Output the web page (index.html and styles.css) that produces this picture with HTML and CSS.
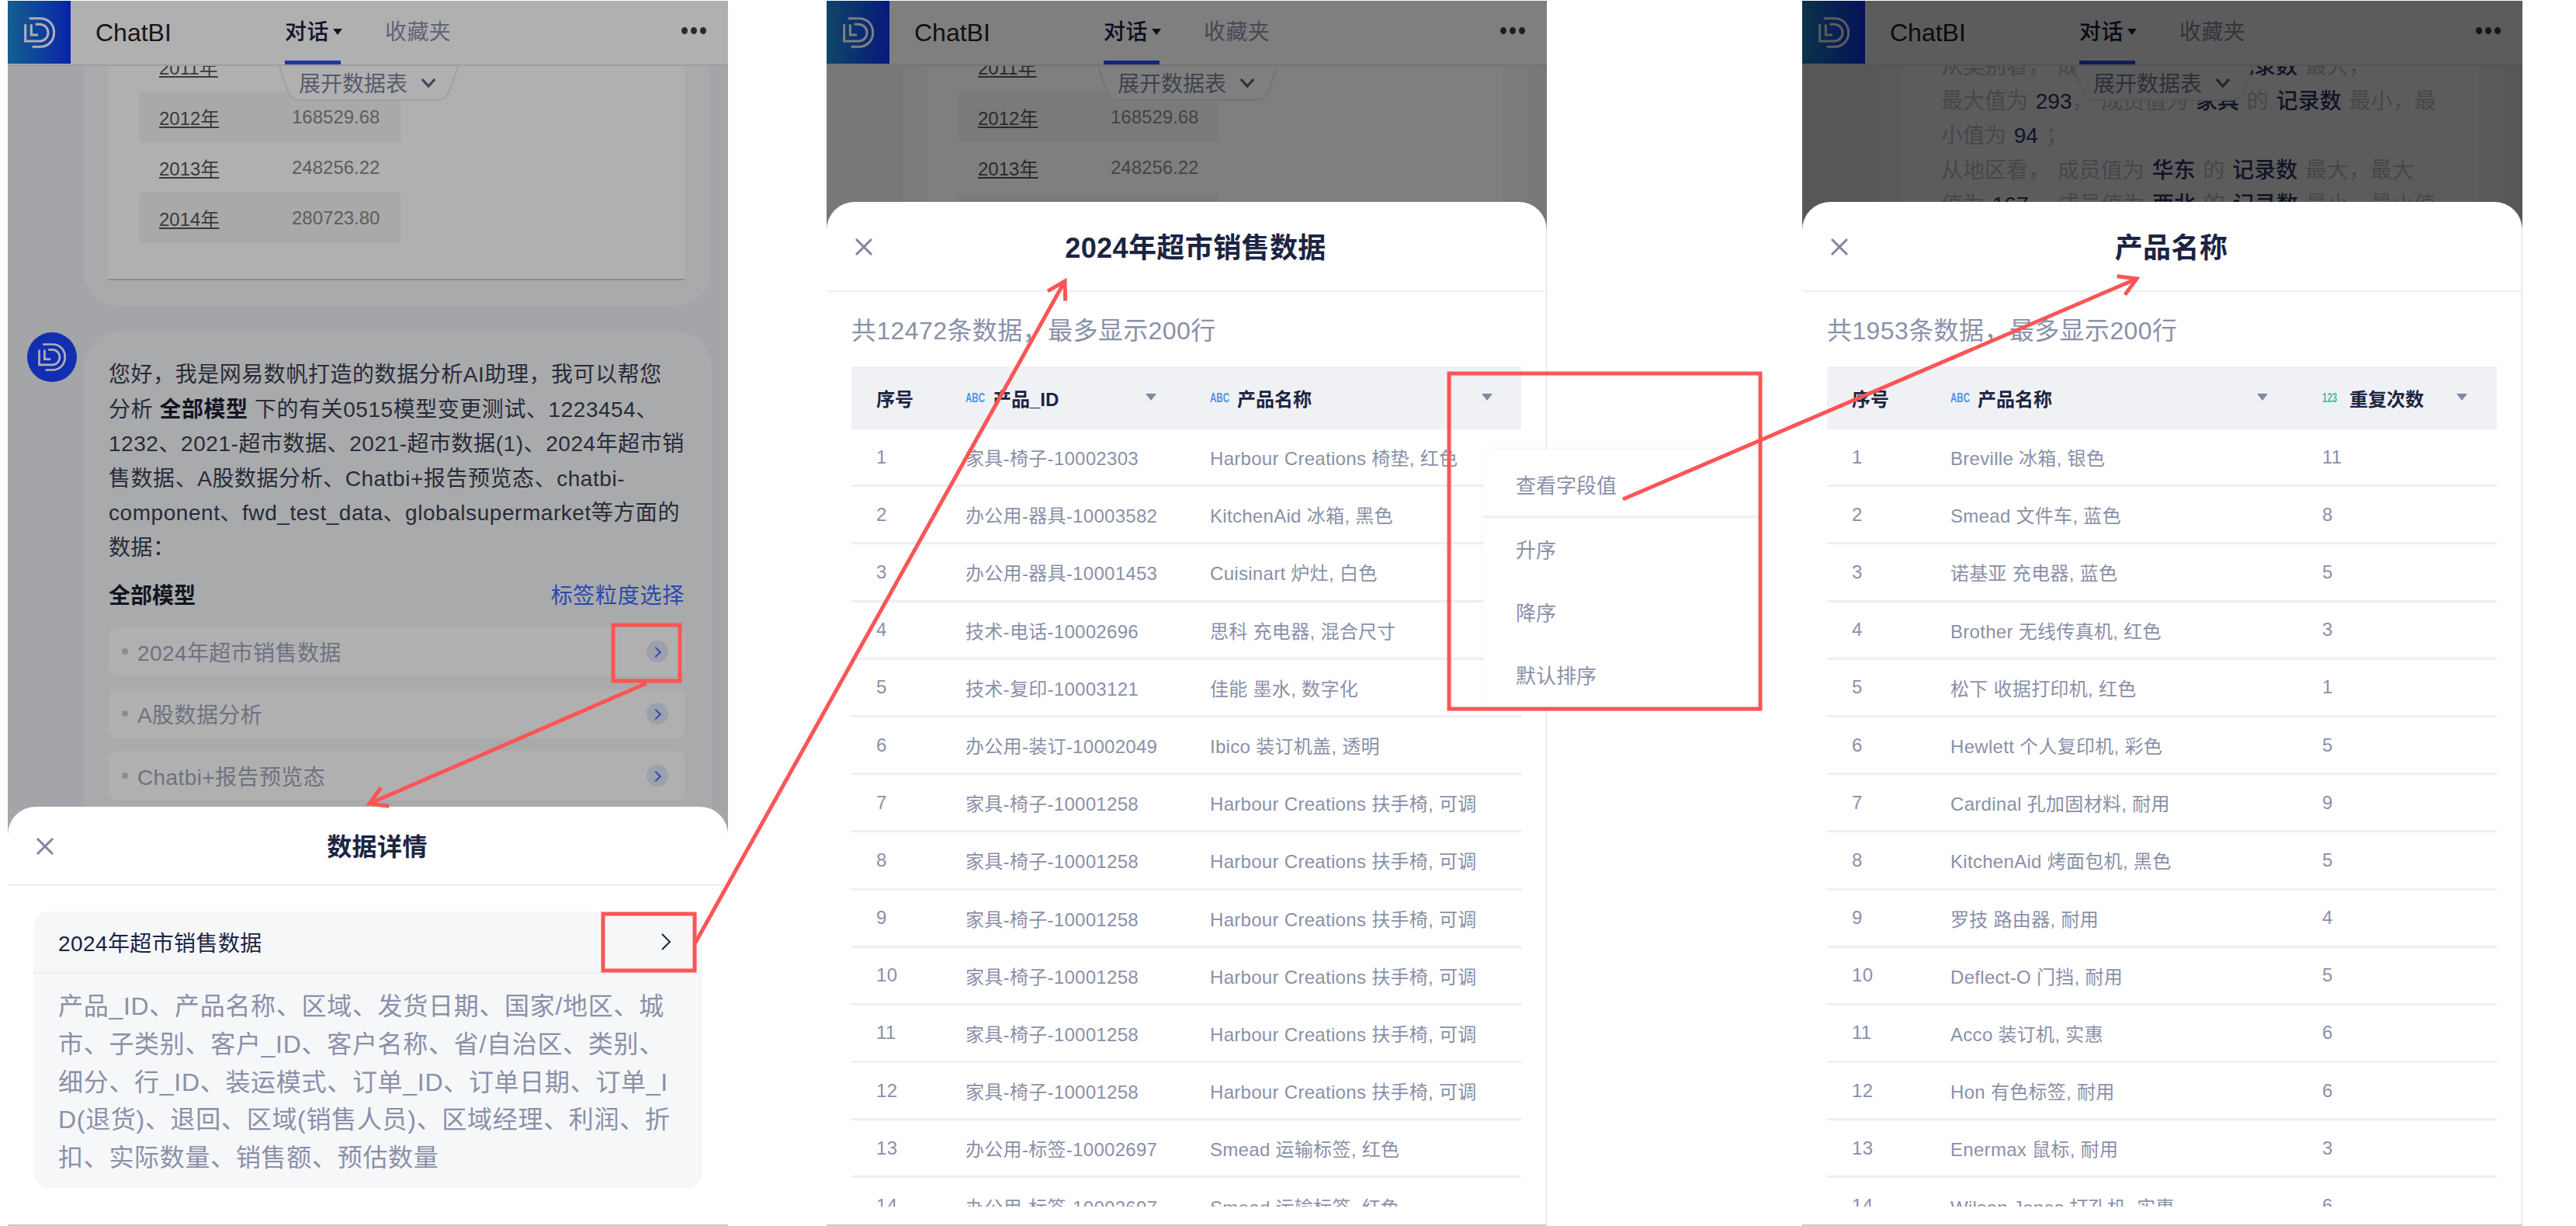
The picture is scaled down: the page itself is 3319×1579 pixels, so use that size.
FILE: index.html
```html
<!DOCTYPE html>
<html lang="zh-CN">
<head>
    <meta charset="UTF-8">
    <title>ChatBI</title>
    <link rel="stylesheet" href="styles.css">
</head>
<body>
<svg class="defs" width="0" height="0">
    <symbol id="logo" viewBox="0 0 120 120">
        <g fill="none" stroke="currentColor" stroke-width="9">
            <path d="M20 5H62C95 5 116 30 116 60C116 92 92 115 62 115H32"/>
            <path d="M44 28H60C80 28 93 43 93 60C93 79 79 93 60 93H5V28"/>
            <path d="M28 28V69H54"/>
        </g>
    </symbol>
    <symbol id="close" viewBox="0 0 24 24">
        <path d="M2 2L22 22M22 2L2 22" fill="none" stroke="currentColor" stroke-width="3"/>
    </symbol>
</svg>

<div class="page">
    <!-- first phone -->
    <section class="phone phone-a">
        <header class="topbar">
            <div class="brand"><svg class="brand-logo"><use href="#logo"/></svg></div>
            <div class="app-name">ChatBI</div>
            <nav class="tabs">
                <div class="tab active">对话<i class="caret"></i></div>
                <div class="tab">收藏夹</div>
            </nav>
            <div class="dots"><i></i><i></i><i></i></div>
        </header>
        <div class="tab-toggle">
            <svg class="tab-shape" viewBox="0 0 232 46"><path d="M1 0C5 14 10 28 14 36C17 42 22 44 28 44H204C210 44 215 42 218 36C222 28 227 14 231 0" /></svg>
            <span>展开数据表</span>
            <svg class="tab-chev" viewBox="0 0 22 14"><path d="M2 2L11 12L20 2"/></svg>
        </div>
        <div class="scroll">
            <div class="bubble table-bubble">
                <div class="table-inner">
                    <table class="year-table">
                        <tr><td><u>2011年</u></td><td></td></tr>
                        <tr class="shade"><td><u>2012年</u></td><td>168529.68</td></tr>
                        <tr><td><u>2013年</u></td><td>248256.22</td></tr>
                        <tr class="shade"><td><u>2014年</u></td><td>280723.80</td></tr>
                    </table>
                </div>
            </div>
            <div class="msg">
                <div class="avatar"><svg><use href="#logo"/></svg></div>
                <div class="bubble msg-bubble">
                    <p class="msg-text">您好，我是网易数帆打造的数据分析AI助理，我可以帮您<br>分析 <b>全部模型</b> 下的有关0515模型变更测试、1223454、<br>1232、2021-超市数据、2021-超市数据(1)、2024年超市销<br>售数据、A股数据分析、Chatbi+报告预览态、chatbi-<br>component、fwd_test_data、globalsupermarket等方面的<br>数据：</p>
                    <div class="model-head"><b>全部模型</b><a>标签粒度选择</a></div>
                    <div class="model-item"><i class="dot"></i><span>2024年超市销售数据</span><i class="go"></i></div>
                    <div class="model-item"><i class="dot"></i><span>A股数据分析</span><i class="go"></i></div>
                    <div class="model-item"><i class="dot"></i><span>Chatbi+报告预览态</span><i class="go"></i></div>
                </div>
            </div>
        </div>
        <div class="scrim"></div>
        <div class="sheet sheet-low">
            <div class="sheet-head">
                <svg class="close"><use href="#close"/></svg>
                <h2>数据详情</h2>
            </div>
            <div class="detail-card">
                <div class="detail-title"><span>2024年超市销售数据</span><svg viewBox="0 0 14 22"><path d="M2 1L12 11L2 21"/></svg></div>
                <p class="detail-fields">产品_ID、产品名称、区域、发货日期、国家/地区、城<br>市、子类别、客户_ID、客户名称、省/自治区、类别、<br>细分、行_ID、装运模式、订单_ID、订单日期、订单_I<br>D(退货)、退回、区域(销售人员)、区域经理、利润、折<br>扣、实际数量、销售额、预估数量</p>
            </div>
        </div>
    </section>

    <!-- second phone -->
    <section class="phone phone-b">
        <header class="topbar">
            <div class="brand"><svg class="brand-logo"><use href="#logo"/></svg></div>
            <div class="app-name">ChatBI</div>
            <nav class="tabs">
                <div class="tab active">对话<i class="caret"></i></div>
                <div class="tab">收藏夹</div>
            </nav>
            <div class="dots"><i></i><i></i><i></i></div>
        </header>
        <div class="tab-toggle">
            <svg class="tab-shape" viewBox="0 0 232 46"><path d="M1 0C5 14 10 28 14 36C17 42 22 44 28 44H204C210 44 215 42 218 36C222 28 227 14 231 0" /></svg>
            <span>展开数据表</span>
            <svg class="tab-chev" viewBox="0 0 22 14"><path d="M2 2L11 12L20 2"/></svg>
        </div>
        <div class="scroll">
            <div class="bubble table-bubble">
                <div class="table-inner">
                    <table class="year-table">
                        <tr><td><u>2011年</u></td><td></td></tr>
                        <tr class="shade"><td><u>2012年</u></td><td>168529.68</td></tr>
                        <tr><td><u>2013年</u></td><td>248256.22</td></tr>
                        <tr class="shade"><td><u>2014年</u></td><td>280723.80</td></tr>
                    </table>
                </div>
            </div>
        </div>
        <div class="scrim"></div>
        <div class="sheet sheet-high">
            <div class="sheet-head">
                <svg class="close"><use href="#close"/></svg>
                <h2>2024年超市销售数据</h2>
            </div>
            <div class="data-sub">共12472条数据，最多显示200行</div>
            <div class="data-table cols-b">
                <div class="row head">
                    <div>序号</div>
                    <div><em class="type abc">ABC</em>产品_ID<i class="filter"></i></div>
                    <div><em class="type abc">ABC</em>产品名称<i class="filter"></i></div>
                </div>
                <div class="row"><div>1</div><div>家具-椅子-10002303</div><div>Harbour Creations 椅垫, 红色</div></div>
                <div class="row"><div>2</div><div>办公用-器具-10003582</div><div>KitchenAid 冰箱, 黑色</div></div>
                <div class="row"><div>3</div><div>办公用-器具-10001453</div><div>Cuisinart 炉灶, 白色</div></div>
                <div class="row"><div>4</div><div>技术-电话-10002696</div><div>思科 充电器, 混合尺寸</div></div>
                <div class="row"><div>5</div><div>技术-复印-10003121</div><div>佳能 墨水, 数字化</div></div>
                <div class="row"><div>6</div><div>办公用-装订-10002049</div><div>Ibico 装订机盖, 透明</div></div>
                <div class="row"><div>7</div><div>家具-椅子-10001258</div><div>Harbour Creations 扶手椅, 可调</div></div>
                <div class="row"><div>8</div><div>家具-椅子-10001258</div><div>Harbour Creations 扶手椅, 可调</div></div>
                <div class="row"><div>9</div><div>家具-椅子-10001258</div><div>Harbour Creations 扶手椅, 可调</div></div>
                <div class="row"><div>10</div><div>家具-椅子-10001258</div><div>Harbour Creations 扶手椅, 可调</div></div>
                <div class="row"><div>11</div><div>家具-椅子-10001258</div><div>Harbour Creations 扶手椅, 可调</div></div>
                <div class="row"><div>12</div><div>家具-椅子-10001258</div><div>Harbour Creations 扶手椅, 可调</div></div>
                <div class="row"><div>13</div><div>办公用-标签-10002697</div><div>Smead 运输标签, 红色</div></div>
                <div class="row"><div>14</div><div>办公用-标签-10002697</div><div>Smead 运输标签, 红色</div></div>
            </div>
        </div>
        <div class="menu">
            <div class="menu-item first">查看字段值</div>
            <div class="menu-item">升序</div>
            <div class="menu-item">降序</div>
            <div class="menu-item">默认排序</div>
        </div>
    </section>

    <!-- third phone -->
    <section class="phone phone-c">
        <header class="topbar">
            <div class="brand"><svg class="brand-logo"><use href="#logo"/></svg></div>
            <div class="app-name">ChatBI</div>
            <nav class="tabs">
                <div class="tab active">对话<i class="caret"></i></div>
                <div class="tab">收藏夹</div>
            </nav>
            <div class="dots"><i></i><i></i><i></i></div>
        </header>
        <div class="tab-toggle">
            <svg class="tab-shape" viewBox="0 0 232 46"><path d="M1 0C5 14 10 28 14 36C17 42 22 44 28 44H204C210 44 215 42 218 36C222 28 227 14 231 0" /></svg>
            <span>展开数据表</span>
            <svg class="tab-chev" viewBox="0 0 22 14"><path d="M2 2L11 12L20 2"/></svg>
        </div>
        <div class="scroll">
            <div class="bubble text-bubble">
                <div class="text-inner">
                    <p class="msg-text summary">从类别看， 成员值为 <b>家具</b> 的 <b>记录数</b> 最大，<br>最大值为 <b>293</b>， 成员值为 <b>家具</b> 的 <b>记录数</b> 最小，最<br>小值为 <b>94</b> ；<br>从地区看， 成员值为 <b>华东</b> 的 <b>记录数</b> 最大，最大<br>值为 <b>167</b>， 成员值为 <b>西北</b> 的 <b>记录数</b> 最小，最小值</p>
                </div>
            </div>
        </div>
        <div class="scrim"></div>
        <div class="sheet sheet-high">
            <div class="sheet-head">
                <svg class="close"><use href="#close"/></svg>
                <h2>产品名称</h2>
            </div>
            <div class="data-sub">共1953条数据，最多显示200行</div>
            <div class="data-table cols-c">
                <div class="row head">
                    <div>序号</div>
                    <div><em class="type abc">ABC</em>产品名称<i class="filter"></i></div>
                    <div><em class="type num">123</em>重复次数<i class="filter"></i></div>
                </div>
                <div class="row"><div>1</div><div>Breville 冰箱, 银色</div><div>11</div></div>
                <div class="row"><div>2</div><div>Smead 文件车, 蓝色</div><div>8</div></div>
                <div class="row"><div>3</div><div>诺基亚 充电器, 蓝色</div><div>5</div></div>
                <div class="row"><div>4</div><div>Brother 无线传真机, 红色</div><div>3</div></div>
                <div class="row"><div>5</div><div>松下 收据打印机, 红色</div><div>1</div></div>
                <div class="row"><div>6</div><div>Hewlett 个人复印机, 彩色</div><div>5</div></div>
                <div class="row"><div>7</div><div>Cardinal 孔加固材料, 耐用</div><div>9</div></div>
                <div class="row"><div>8</div><div>KitchenAid 烤面包机, 黑色</div><div>5</div></div>
                <div class="row"><div>9</div><div>罗技 路由器, 耐用</div><div>4</div></div>
                <div class="row"><div>10</div><div>Deflect-O 门挡, 耐用</div><div>5</div></div>
                <div class="row"><div>11</div><div>Acco 装订机, 实惠</div><div>6</div></div>
                <div class="row"><div>12</div><div>Hon 有色标签, 耐用</div><div>6</div></div>
                <div class="row"><div>13</div><div>Enermax 鼠标, 耐用</div><div>3</div></div>
                <div class="row"><div>14</div><div>Wilson Jones 打孔机, 实惠</div><div>6</div></div>
            </div>
        </div>
    </section>

    <!-- red call-outs drawn over the screenshots -->
    <svg class="callouts" viewBox="0 0 3319 1579">
        <defs>
            <marker id="head" markerUnits="userSpaceOnUse" markerWidth="40" markerHeight="40" refX="30" refY="20" orient="auto">
                <path d="M8 7L30 20L8 33" fill="none" stroke="#fb5555" stroke-width="5"/>
            </marker>
        </defs>
        <rect x="790" y="805" width="86" height="72"/>
        <rect x="777" y="1177" width="118" height="73"/>
        <rect x="1867" y="481" width="401" height="432"/>
        <line x1="833" y1="880" x2="476" y2="1035" marker-end="url(#head)"/>
        <line x1="896" y1="1214" x2="1372" y2="362" marker-end="url(#head)"/>
        <line x1="2091" y1="643" x2="2753" y2="359" marker-end="url(#head)"/>
    </svg>
</div>
</body>
</html>
```

FILE: styles.css
```css
* {
    box-sizing: border-box;
}

body {
    margin: 0;
    background-color: #fff;
    font-family: "Liberation Sans", "Noto Sans CJK SC", sans-serif;
    color: #1b2442;
}

.defs {
    position: absolute;
}

p, h2 {
    margin: 0;
}

.page {
    position: relative;
    width: 3319px;
    height: 1579px;
    display: flex;
    padding-top: 1px;
    overflow: hidden;
}

.phone {
    position: relative;
    flex: none;
    width: 928px;
    height: 1578px;
    background-color: #eef0f4;
}

.phone-a { margin-left: 10px; }
.phone-b { margin-left: 127px; }
.phone-c { margin-left: 329px; }

/* top bar */
.topbar {
    height: 84px;
    display: flex;
    align-items: flex-start;
    background-color: #fff;
    border-bottom: 2px solid #e4e4e6;
}

.brand {
    width: 81px;
    height: 81px;
    display: flex;
    align-items: center;
    justify-content: center;
    background: linear-gradient(90deg, #1d8bd0, #0d34f5);
}

.brand-logo {
    width: 40px;
    height: 40px;
    color: #fff;
}

.app-name {
    width: 244px;
    margin-left: 32px;
    font-size: 32px;
    line-height: 82px;
    color: #222;
}

.tabs {
    display: flex;
    gap: 57px;
    flex: 1;
}

.tab {
    position: relative;
    height: 82px;
    font-size: 28px;
    line-height: 82px;
    color: #8c92aa;
    letter-spacing: 0.4px;
}

.tab.active {
    width: 72px;
    color: #17203f;
    font-weight: 500;
}

.tab.active::after {
    content: "";
    position: absolute;
    left: 0;
    right: 0;
    bottom: 0;
    height: 5px;
    background-color: #2a4ff5;
}

.caret {
    position: absolute;
    left: 62px;
    top: 36px;
    border: 6px solid transparent;
    border-top: 8px solid #17203f;
    border-bottom: 0;
}

.dots {
    display: flex;
    gap: 4px;
    margin: 34px 28px 0 0;
}

.dots i {
    width: 8px;
    height: 9px;
    border-radius: 50%;
    background-color: #3c3c44;
}

/* tab hanging under the top bar */
.tab-toggle {
    position: absolute;
    left: 349px;
    top: 84px;
    width: 232px;
    height: 46px;
    z-index: 1;
    display: flex;
    align-items: center;
    padding: 0 0 4px 26px;
    font-size: 28px;
    color: #7e849e;
}

.tab-shape {
    position: absolute;
    left: 0;
    top: 0;
    width: 232px;
    height: 46px;
}

.tab-shape path {
    fill: #fff;
    stroke: #e6e8f0;
    stroke-width: 2;
}

.tab-toggle span {
    position: relative;
}

.tab-chev {
    position: relative;
    width: 20px;
    height: 13px;
    margin-left: 17px;
    fill: none;
    stroke: #5d6480;
    stroke-width: 3.5;
}

/* chat behind the sheet */
.scroll {
    height: 1494px;
    overflow: hidden;
    padding: 0 23px 0 25px;
}

.bubble {
    background-color: #f5f6f9;
}

.table-bubble {
    margin: -32px 0 34px 73px;
    padding: 0 33px 33px 31px;
    border-radius: 0 0 44px 44px;
}

.table-inner {
    padding: 0 41px 46px;
    background-color: #fff;
    border-bottom: 2px solid #cfd0d4;
}

.year-table {
    border-collapse: collapse;
    font-size: 24px;
    color: #888;
}

.year-table td {
    width: 165px;
    height: 65px;
    padding-left: 25px;
}

.year-table td:first-child {
    width: 171px;
}

.year-table .shade td {
    background-color: #f5f5f5;
}

.year-table u {
    color: #555;
}

.msg {
    display: flex;
    gap: 9px;
}

.avatar {
    flex: none;
    width: 64px;
    height: 64px;
    display: flex;
    align-items: center;
    justify-content: center;
    border-radius: 50%;
    background-color: #1a44ff;
    color: #fff;
}

.avatar svg {
    width: 36px;
    height: 36px;
}

.msg-bubble {
    flex: 1;
    padding: 33px 35px 0 32px;
    border-radius: 44px 44px 0 0;
    height: 700px;
}

.msg-text {
    font-size: 28px;
    line-height: 44.6px;
    color: #3a3f52;
    letter-spacing: 0.55px;
    white-space: nowrap;
}

.msg-text b {
    font-weight: 600;
    color: #1b1f30;
}

.msg-text.summary {
    color: #c0c4d0;
    letter-spacing: 0;
    word-spacing: 2px;
}

.msg-text.summary b {
    font-weight: 500;
    color: #30386a;
}

.model-head {
    display: flex;
    justify-content: space-between;
    margin-top: 19px;
    font-size: 28px;
    line-height: 40px;
    color: #1b1f30;
}

.model-head b {
    font-weight: 600;
}

.model-head a {
    color: #3f69ff;
    letter-spacing: 0.7px;
}

.model-item {
    display: flex;
    align-items: center;
    height: 64px;
    margin-top: 16px;
    padding: 0 21px 0 17px;
    border-radius: 12px;
    background-color: #fff;
    font-size: 28px;
    color: #a0a6bc;
}

.model-head + .model-item {
    margin-top: 19px;
}

.dot {
    width: 8px;
    height: 8px;
    margin-right: 12px;
    border-radius: 50%;
    background-color: #c6cbe2;
}

.model-item span {
    flex: 1;
    letter-spacing: 0.4px;
}

.go {
    position: relative;
    width: 28px;
    height: 28px;
    border-radius: 50%;
    background-color: #e4e8fb;
}

.go::after {
    content: "";
    position: absolute;
    left: 7px;
    top: 10px;
    width: 8px;
    height: 8px;
    border-top: 2px solid #4a6aff;
    border-right: 2px solid #4a6aff;
    transform: rotate(45deg);
}

.text-bubble {
    margin: -21px 0 0 73px;
    padding: 0 33px 0 31px;
    height: 700px;
}

.text-inner {
    height: 700px;
    padding: 0 0 0 50px;
    background-color: #fff;
}

.scrim {
    position: absolute;
    inset: 0;
    z-index: 2;
}

.phone-a .scrim { background-color: rgba(0, 0, 0, 0.31); }
.phone-b .scrim { background-color: rgba(0, 0, 0, 0.5); }
.phone-c .scrim { background-color: rgba(0, 0, 0, 0.64); }

.sheet {
    position: absolute;
    left: 0;
    right: 0;
    bottom: 0;
    z-index: 3;
    display: flex;
    flex-direction: column;
    background-color: #fff;
    border-radius: 36px 36px 0 0;
    border-bottom: 2px solid #c8c8c8;
}

.sheet-low {
    top: 1038px;
}

.sheet-high {
    top: 259px;
    border-right: 1px solid #ddd;
}

.sheet-head {
    position: relative;
    flex: none;
    display: flex;
    align-items: center;
    justify-content: center;
    border-bottom: 2px solid #eeeef5;
}

.sheet-low .sheet-head {
    height: 102px;
}

.sheet-high .sheet-head {
    height: 116px;
}

.sheet-head h2 {
    padding: 0 0 3px 24px;
    font-weight: 600;
    letter-spacing: 0.4px;
}

.sheet-low h2 { font-size: 32px; }
.sheet-high h2 { font-size: 36px; }

.close {
    position: absolute;
    left: 36px;
    top: 39px;
    width: 24px;
    height: 24px;
    color: #7f85a1;
}

.sheet-high .close {
    top: 46px;
}

/* first sheet */
.detail-card {
    margin: 33px 33px 0 33px;
    height: 356px;
    border-radius: 20px;
    background-color: #f6f7f9;
}

.detail-title {
    display: flex;
    align-items: center;
    justify-content: space-between;
    height: 80px;
    padding: 0 40px 0 32px;
    border-bottom: 2px solid #eeeff5;
    font-size: 28px;
    letter-spacing: 0.4px;
}

.detail-title svg {
    width: 14px;
    height: 22px;
    fill: none;
    stroke: #1b2442;
    stroke-width: 2;
}

.detail-fields {
    padding: 18px 0 0 32px;
    font-size: 32px;
    line-height: 48.8px;
    color: #8a90a8;
    letter-spacing: 0.7px;
    white-space: nowrap;
}

/* data sheets */
.data-sub {
    flex: none;
    padding: 27px 0 0 32px;
    height: 96px;
    font-size: 32px;
    line-height: 46px;
    color: #8a90a8;
    letter-spacing: 0.4px;
}

.data-table {
    flex: none;
    height: 1082px;
    margin: 0 32px;
    overflow: hidden;
    font-size: 24px;
    color: #8a90a8;
}

.row {
    display: grid;
    height: 74.2px;
    align-items: center;
    border-bottom: 3px solid #eeeef5;
    letter-spacing: 0.3px;
}

.cols-b .row { grid-template-columns: 147px 315px 1fr; }
.cols-c .row { grid-template-columns: 159px 479px 1fr; }

.row > div:first-child {
    padding-left: 32px;
}

.row.head {
    height: 81px;
    border-bottom: 0;
    background-color: #f0f1f4;
    color: #1b2442;
    font-weight: 600;
    letter-spacing: 0;
}

.row.head > div {
    position: relative;
    display: flex;
    align-items: center;
}

.type {
    width: 24px;
    margin-right: 11px;
    font-size: 16px;
    font-style: normal;
    font-weight: 700;
    transform: scaleX(0.72);
    transform-origin: left center;
    white-space: nowrap;
}

.abc { color: #4d95e8; }
.num { color: #3cc29a; }

.filter {
    position: absolute;
    top: 50%;
    margin-top: -6px;
    border: 7.5px solid transparent;
    border-top: 9px solid #8288a4;
    border-bottom: 0;
}

.cols-b .head > div:nth-child(2) .filter { left: 232px; }
.cols-b .head > div:nth-child(3) .filter { left: 350px; }
.cols-c .head > div:nth-child(2) .filter { left: 395px; }
.cols-c .head > div:nth-child(3) .filter { left: 173px; }

/* column menu, it runs past the right edge of the phone */
.menu {
    position: absolute;
    left: 846px;
    top: 578px;
    z-index: 4;
    width: 356px;
    height: 332px;
    background-color: #fff;
    box-shadow: 0 -2px 8px rgba(30, 40, 80, 0.03);
    font-size: 26px;
    color: #8a90a8;
}

.menu-item {
    height: 81px;
    padding-left: 42px;
    line-height: 81px;
}

.menu-item.first {
    height: 88px;
    line-height: 94px;
    border-bottom: 3px solid #eeeef5;
    margin-bottom: 2px;
}

.callouts {
    position: absolute;
    left: 0;
    top: 0;
    z-index: 5;
    width: 3319px;
    height: 1579px;
}

.callouts rect,
.callouts line {
    fill: none;
    stroke: #fb5555;
    stroke-width: 5;
}
```
